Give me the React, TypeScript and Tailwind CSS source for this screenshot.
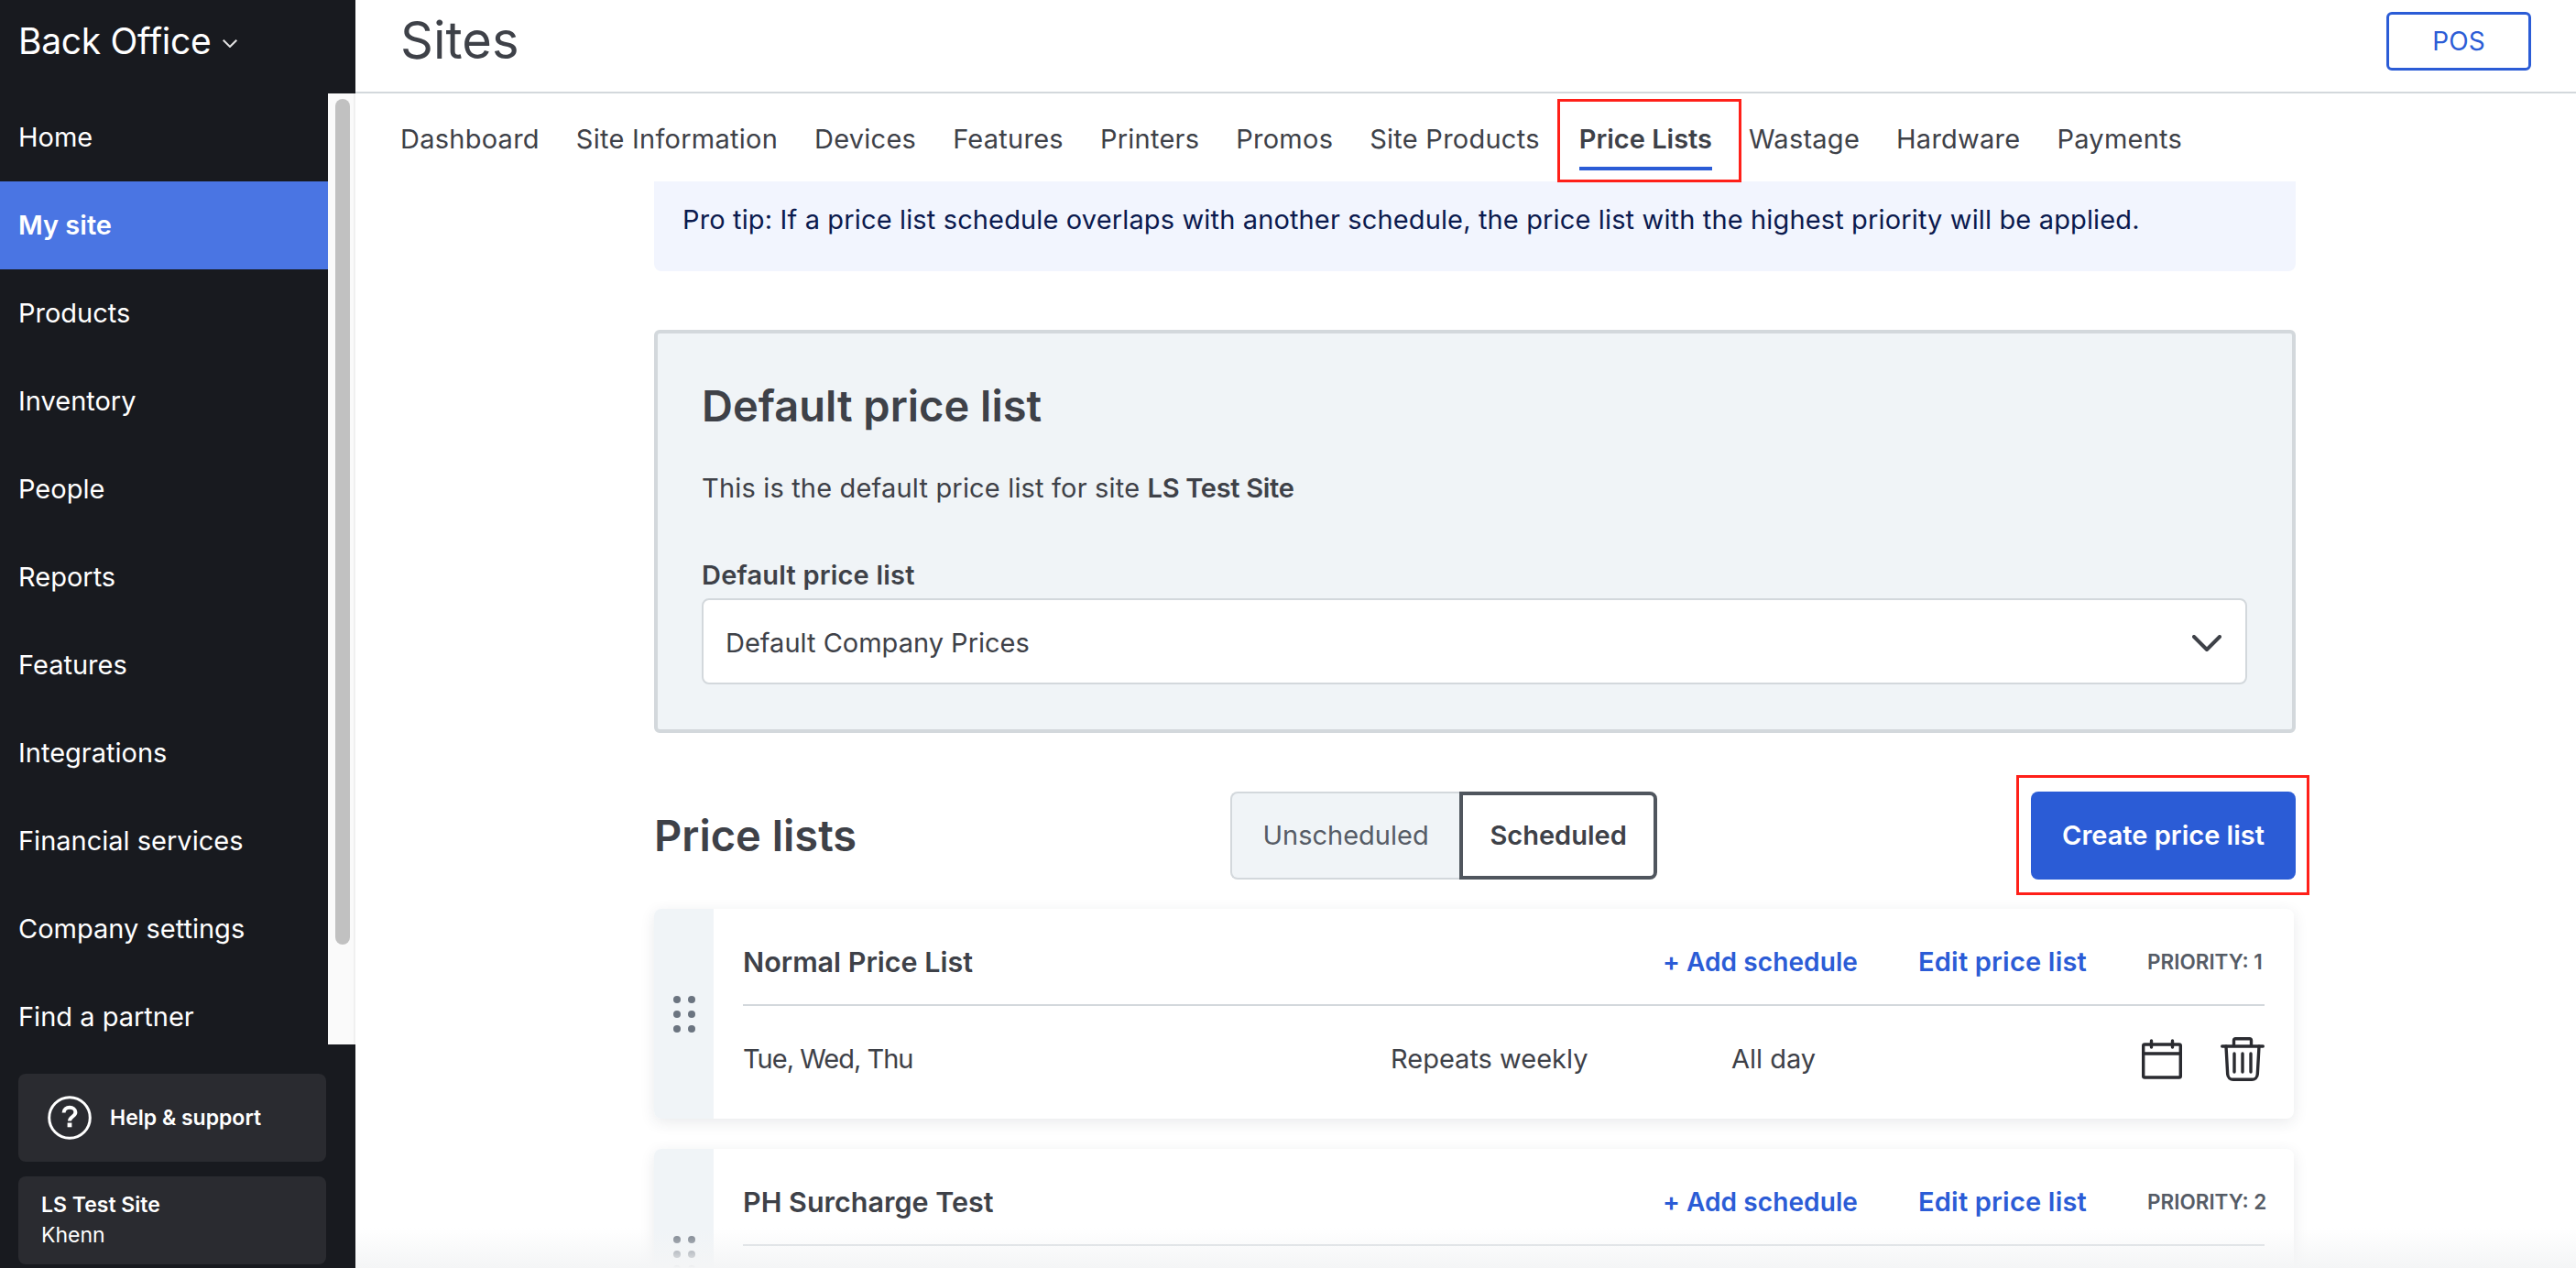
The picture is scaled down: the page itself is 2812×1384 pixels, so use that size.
const navItems = [
  "Home",
  "My site",
  "Products",
  "Inventory",
  "People",
  "Reports",
  "Features",
  "Integrations",
  "Financial services",
  "Company settings",
  "Find a partner",
];

const tabs = [
  "Dashboard",
  "Site Information",
  "Devices",
  "Features",
  "Printers",
  "Promos",
  "Site Products",
  "Price Lists",
  "Wastage",
  "Hardware",
  "Payments",
];

const priceLists = [
  { name: "Normal Price List", priority: 1, days: "Tue, Wed, Thu", repeat: "Repeats weekly", time: "All day" },
  { name: "PH Surcharge Test", priority: 2 },
];

function HelpIcon() {
  return (
    <svg width="48" height="48" viewBox="0 0 48 48" fill="none" stroke="white" strokeWidth="3">
      <circle cx="24" cy="24" r="22.3" />
      <path d="M17.6 18.5c0-3.8 2.9-5.7 6.4-5.7s6.4 2 6.4 5.3c0 4.6-6.4 4.7-6.4 9.4" strokeWidth="4" />
      <rect x="21.6" y="29.5" width="4.8" height="4.8" fill="white" stroke="none" />
    </svg>
  );
}

function CalendarIcon() {
  return (
    <svg width="44" height="44" viewBox="0 0 44 44" fill="none" stroke="#2a2b30" strokeWidth="3.4" strokeLinecap="round" strokeLinejoin="round">
      <rect x="1.7" y="6" width="40.6" height="36" rx="1.5" />
      <path d="M1.7 16h40.6" />
      <path d="M10.5 2v7M33.5 2v7" />
    </svg>
  );
}

function TrashIcon() {
  return (
    <svg width="48" height="48" viewBox="0 0 48 48" fill="none" stroke="#2a2b30" strokeWidth="3.4" strokeLinecap="round" strokeLinejoin="round">
      <path d="M1.7 10h44.6" />
      <path d="M14.5 9V3.5a1.7 1.7 0 0 1 1.7-1.7h15.6a1.7 1.7 0 0 1 1.7 1.7V9" />
      <path d="M6 10l1.7 30.5c.2 3.5 3 5.8 6 5.8h20.6c3 0 5.8-2.3 6-5.8L42 10" />
      <path d="M15 18v20M24 18v20M33 18v20" />
    </svg>
  );
}

function Sidebar() {
  return (
    <aside className="flex w-[388px] shrink-0 flex-col bg-[#181a1f] text-white">
      <div className="flex h-[102px] items-start pl-[20px] pt-[22px]">
        <span className="text-[39px] leading-[46px] tracking-[-0.3px]">Back Office</span>
        <svg width="16" height="9" viewBox="0 0 16 9" fill="none" stroke="#e2e2e2" strokeWidth="2" className="ml-[13px] mt-[21px]">
          <path d="M.7.7 8 8l7.3-7.3" />
        </svg>
      </div>
      <div className="flex h-[1038px]">
        <nav className="w-[358px]">
          {navItems.map((item) => (
            <div
              key={item}
              className={`flex h-[96px] items-center pl-[20px] text-[29px] ${
                item === "My site" ? "bg-[#4a75e3] font-semibold" : ""
              }`}
            >
              {item}
            </div>
          ))}
        </nav>
        {/* scrollbar */}
        <div className="w-[30px] border-r-2 border-[#f0f0f0] bg-[#fafafa] pl-[8px] pt-[6px]">
          <div className="h-[923px] w-[16px] rounded-full bg-[#c1c1c1]" />
        </div>
      </div>
      <div className="mx-[20px] mt-[32px] flex h-[96px] w-[336px] items-center rounded-lg bg-[#2a2b30] pl-[32px]">
        <HelpIcon />
        <span className="ml-[20px] text-[23px] font-semibold">Help &amp; support</span>
      </div>
      <div className="mx-[20px] mt-[16px] flex h-[96px] w-[336px] flex-col justify-center rounded-lg bg-[#2a2b30] pl-[25px]">
        <div className="text-[23px] font-semibold leading-[32px]">LS Test Site</div>
        <div className="text-[23px] leading-[34px]">Khenn</div>
      </div>
    </aside>
  );
}

function PriceListCard({ list }: { list: (typeof priceLists)[number] }) {
  return (
    <div className="flex h-[229px] w-[1790px] shrink-0 overflow-hidden rounded-lg bg-white shadow-[0_4px_16px_rgba(40,50,70,0.10)]">
      <div className="flex w-[65px] shrink-0 items-center justify-center bg-[#f0f4f7]">
        <div className="grid grid-cols-2 gap-[8px]">
          {[0, 1, 2, 3, 4, 5].map((i) => (
            <span key={i} className="h-[8px] w-[8px] rounded-full bg-[#6b7480]" />
          ))}
        </div>
      </div>
      <div className="flex-1 pl-[32px] pr-[32px]">
        <div className="flex h-[106px] items-center border-b-2 border-[#d3d8dc] pt-[12px]">
          <span className="flex-1 text-[30.5px] font-semibold text-[#3e4148]">{list.name}</span>
          <span className="text-[28px] font-semibold tracking-[0.1px] text-[#2b5cd6]">+ Add schedule</span>
          <span className="ml-[66px] text-[29px] font-semibold tracking-[0.2px] text-[#2b5cd6]">Edit price list</span>
          <span className="ml-[66px] w-[128px] shrink-0 whitespace-nowrap text-[22.5px] font-semibold text-[#565c66]">PRIORITY: {list.priority}</span>
        </div>
        {list.days && (
          <div className="grid h-[121px] grid-cols-[707px_372px_1fr_auto] items-center pb-[6px] text-[29px] text-[#3e4148]">
            <span className="tracking-[-1px]">{list.days}</span>
            <span>{list.repeat}</span>
            <span>{list.time}</span>
            <div className="flex items-center gap-[42px]">
              <CalendarIcon />
              <TrashIcon />
            </div>
          </div>
        )}
      </div>
    </div>
  );
}

export default function App() {
  return (
    <div className="relative flex h-[1384px] w-[2812px] overflow-hidden bg-white font-['Inter',sans-serif] text-[#3e4148]">
      <Sidebar />
      <main className="min-w-0 flex-1">
        <header className="flex h-[102px] items-center justify-between border-b-2 border-[#d3d8dc] pl-[49px] pr-[49px]">
          <h1 className="mb-[12px] text-[56px] leading-[60px]">Sites</h1>
          <button className="mb-[10px] flex h-[64px] w-[158px] items-center justify-center rounded-md border-[3px] border-[#2b5cd6] text-[28px] text-[#2b5cd6]">
            POS
          </button>
        </header>

        <div className="flex h-[96px] items-start gap-[40px] pl-[49px] pt-[30px]">
          {tabs.map((tab) => (
            <div key={tab} className={`relative ${tab === "Price Lists" ? "ml-[3px]" : ""}`}>
              <div className={`text-[29px] leading-[40px] ${tab === "Price Lists" ? "font-semibold" : "tracking-[0.25px]"}`}>{tab}</div>
              {tab === "Price Lists" && (
                <>
                  <div className="mt-[10px] h-[4px] bg-[#2b5cd6]" />
                  {/* red annotation */}
                  <div className="absolute -bottom-[13px] -left-[24px] -right-[32px] -top-[24px] border-[3px] border-[#ff2019]" />
                </>
              )}
            </div>
          ))}
        </div>

        <div className="ml-[326px] w-[1792px]">
          <div className="flex h-[98px] rounded-b-lg bg-[#f2f5fe] pl-[31px] pt-[24px] text-[29px] leading-[36px] tracking-[0.14px] text-[#0b1a4e]">
            Pro tip: If a price list schedule overlaps with another schedule, the price list with the highest priority will be applied.
          </div>

          <section className="mt-[64px] h-[440px] rounded-md border-4 border-[#d3d8dc] bg-[#f0f4f7] pl-[48px] pr-[49px] pt-[51px]">
            <h2 className="text-[47px] font-semibold leading-[56px]">Default price list</h2>
            <p className="mt-[44px] text-[29px] leading-[36px] tracking-[0.17px]">
              This is the default price list for site <strong className="font-semibold tracking-[-0.3px]">LS Test Site</strong>
            </p>
            <div className="mt-[59px] text-[29px] font-semibold leading-[36px] tracking-[0.2px]">Default price list</div>
            <div className="mt-[7px] flex h-[94px] items-center justify-between rounded-lg border-2 border-[#d3d8dc] bg-white pl-[24px] pr-[26px] pt-[4px] text-[29px]">
              <span>Default Company Prices</span>
              <svg width="32" height="19" viewBox="0 0 32 19" fill="none" stroke="#3e4148" strokeWidth="4" strokeLinecap="round" strokeLinejoin="round">
                <path d="M2 2l14 14L30 2" />
              </svg>
            </div>
          </section>

          <div className="mt-[64px] flex h-[96px] items-center justify-between">
            <h2 className="text-[47px] font-semibold leading-[56px]">Price lists</h2>
            <div className="flex h-[96px] w-[466px]">
              <div className="flex w-[250px] items-center justify-center rounded-l-lg border-2 border-r-0 border-[#d3d8dc] bg-[#f0f4f7] text-[29px] text-[#565c66]">
                Unscheduled
              </div>
              <div className="flex w-[216px] items-center justify-center rounded-r-lg border-4 border-[#50565e] bg-white text-[29px] font-semibold">
                Scheduled
              </div>
            </div>
            <div className="relative">
              <button className="h-[96px] w-[289px] rounded-lg bg-[#2b5cd6] text-[29px] font-semibold text-white">
                Create price list
              </button>
              {/* red annotation */}
              <div className="absolute -bottom-[17px] -left-[16px] -right-[15px] -top-[18px] border-[3px] border-[#ff2019]" />
            </div>
          </div>

          <div className="mt-[32px] flex flex-col gap-[33px]">
            {priceLists.map((list) => (
              <PriceListCard key={list.name} list={list} />
            ))}
          </div>
        </div>
      </main>
      <div className="absolute bottom-0 left-[388px] right-0 h-[44px] bg-gradient-to-b from-transparent to-[#f4f5f6]" />
    </div>
  );
}
